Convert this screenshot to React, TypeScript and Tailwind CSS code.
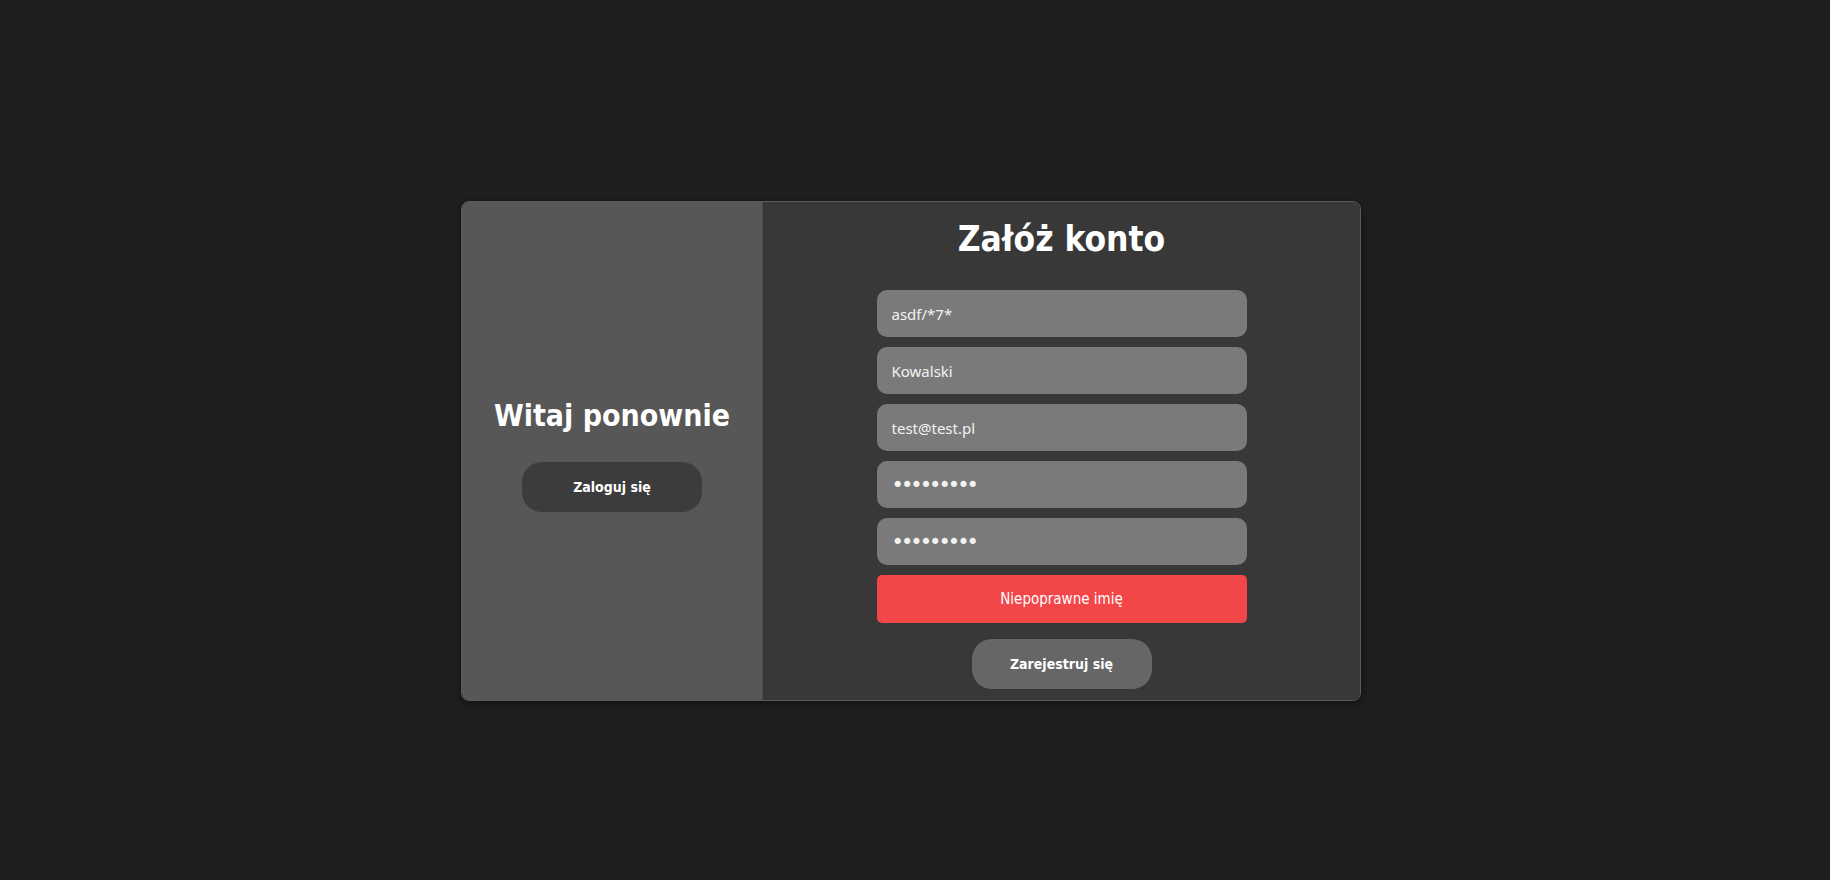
import { useState } from "react";

const heading = "font-['DejaVu_Sans_Condensed','Open_Sans',sans-serif]";

function Field({ value, type = "text" }: { value: string; type?: string }) {
  const secret = type === "password";
  return (
    <input
      type={type}
      defaultValue={value}
      className={`h-[47px] w-[370px] rounded-[10px] bg-[#7a7a7a] px-[15px] text-[#f2f2f2] outline-none ${
        secret ? "text-[21px] tracking-[-3px] font-['DejaVu_Sans',sans-serif]" : "text-[15px] font-['Noto_Sans',sans-serif]"
      }`}
    />
  );
}

export default function App() {
  const [error] = useState("Niepoprawne imię");

  return (
    <div className="min-h-screen w-full bg-[#1f1f1f] pt-[201px] pl-[461px]">
      <div className="flex h-[500px] w-[900px] overflow-hidden rounded-lg border border-[#5a5a5a] shadow-[0_2px_8px_rgba(0,0,0,0.5)]">
        <div className="flex w-[301px] flex-col items-center justify-center gap-[31px] border-r border-[#4a4a4a] bg-[#575757] pt-[11px]">
          <h2 className={`text-[30px] leading-none font-bold text-white ${heading}`}>Witaj ponownie</h2>
          <button className={`h-[50px] w-[180px] rounded-[20px] bg-[#3c3c3c] text-[14px] font-bold text-white ${heading}`}>
            Zaloguj się
          </button>
        </div>

        <div className="flex flex-1 flex-col items-center bg-[#383838]">
          <h1 className={`mt-[20px] text-[35px] leading-none font-bold text-white ${heading}`}>Załóż konto</h1>
          <form className="mt-[33px] flex flex-col items-center gap-[10px]" onSubmit={(e) => e.preventDefault()}>
            <Field value="asdf/*7*" />
            <Field value="Kowalski" />
            <Field value="test@test.pl" />
            <Field value="123456789" type="password" />
            <Field value="123456789" type="password" />
            <div className={`flex h-[48px] w-[370px] items-center justify-center rounded-[5px] bg-[#f24649] text-[15px] text-white ${heading}`}>
              {error}
            </div>
            <button
              type="submit"
              className={`mt-[6px] h-[50px] w-[180px] rounded-[20px] bg-[#666666] text-[14px] font-bold text-white ${heading}`}
            >
              Zarejestruj się
            </button>
          </form>
        </div>
      </div>
    </div>
  );
}
